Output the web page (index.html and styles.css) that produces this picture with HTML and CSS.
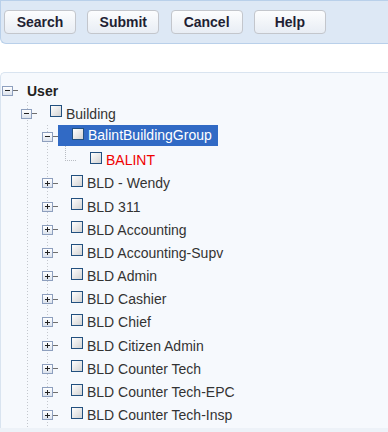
FILE: index.html
```html
<!DOCTYPE html>
<html lang="en">
<head>
  <meta charset="UTF-8" />
  <title>User Tree</title>
  <link rel="stylesheet" href="styles.css">
</head>
<body>
  <div class="toolbar">
    <button class="tool-button">Search</button>
    <button class="tool-button">Submit</button>
    <button class="tool-button">Cancel</button>
    <button class="tool-button">Help</button>
  </div>

  <div class="tree">
    <ul class="nodes">
      <li>
        <div class="row lvl0"><span class="exp minus"></span><span class="dash"></span><span class="node root"><span class="label">User</span></span></div>
        <ul class="nodes sub1">
          <li>
            <div class="row lvl1"><span class="exp minus"></span><span class="dash"></span><span class="node"><span class="check"></span><span class="label">Building</span></span></div>
            <ul class="nodes sub2">
              <li>
                <div class="row lvl2"><span class="exp minus"></span><span class="dash"></span><span class="node selected"><span class="check"></span><span class="label">BalintBuildingGroup</span></span></div>
                <ul class="nodes">
                  <li>
                    <div class="row lvl3"><span class="elbow"></span><span class="node"><span class="check"></span><span class="label red">BALINT</span></span></div>
                  </li>
                </ul>
              </li>
              <li><div class="row lvl2"><span class="exp plus"></span><span class="dash"></span><span class="node"><span class="check"></span><span class="label">BLD - Wendy</span></span></div></li>
              <li><div class="row lvl2"><span class="exp plus"></span><span class="dash"></span><span class="node"><span class="check"></span><span class="label">BLD 311</span></span></div></li>
              <li><div class="row lvl2"><span class="exp plus"></span><span class="dash"></span><span class="node"><span class="check"></span><span class="label">BLD Accounting</span></span></div></li>
              <li><div class="row lvl2"><span class="exp plus"></span><span class="dash"></span><span class="node"><span class="check"></span><span class="label">BLD Accounting-Supv</span></span></div></li>
              <li><div class="row lvl2"><span class="exp plus"></span><span class="dash"></span><span class="node"><span class="check"></span><span class="label">BLD Admin</span></span></div></li>
              <li><div class="row lvl2"><span class="exp plus"></span><span class="dash"></span><span class="node"><span class="check"></span><span class="label">BLD Cashier</span></span></div></li>
              <li><div class="row lvl2"><span class="exp plus"></span><span class="dash"></span><span class="node"><span class="check"></span><span class="label">BLD Chief</span></span></div></li>
              <li><div class="row lvl2"><span class="exp plus"></span><span class="dash"></span><span class="node"><span class="check"></span><span class="label">BLD Citizen Admin</span></span></div></li>
              <li><div class="row lvl2"><span class="exp plus"></span><span class="dash"></span><span class="node"><span class="check"></span><span class="label">BLD Counter Tech</span></span></div></li>
              <li><div class="row lvl2"><span class="exp plus"></span><span class="dash"></span><span class="node"><span class="check"></span><span class="label">BLD Counter Tech-EPC</span></span></div></li>
              <li><div class="row lvl2"><span class="exp plus"></span><span class="dash"></span><span class="node"><span class="check"></span><span class="label">BLD Counter Tech-Insp</span></span></div></li>
            </ul>
          </li>
        </ul>
      </li>
    </ul>
  </div>
  <div class="status-bar"></div>
</body>
</html>
```

FILE: styles.css
```css
* { box-sizing: border-box; }
body {
  margin: 0;
  font-family: 'Liberation Sans', Arial, sans-serif;
  font-size: 14px;
  background: #ffffff;
  color: #333;
  overflow: hidden;
}
.toolbar {
  height: 44px;
  display: flex;
  gap: 11.3px;
  padding: 9px 0 0 3px;
  background: #dde8f5;
  border: 1px solid #b9d0ea;
  border-right: none;
  border-radius: 0 0 0 6px;
}
.tool-button {
  width: 72px;
  height: 24px;
  padding: 0;
  font-family: inherit;
  font-size: 14px;
  font-weight: bold;
  color: #1f1f33;
  background: linear-gradient(#fcfdfe, #e8edf4);
  border: 1px solid #c3c6cc;
  border-radius: 4px;
  cursor: pointer;
}
.tree {
  margin-top: 28px;
  height: 356px;
  overflow: hidden;
  padding-top: 6px;
  background: #f6f9fd;
  border-top: 1px solid #d9e4f0;
  border-left: 1px solid #d9e4f0;
  border-radius: 5px 0 0 0;
}
.status-bar {
  height: 10px;
  background: #edf2f8;
}
.nodes {
  list-style: none;
  margin: 0;
  padding: 0;
}
.sub1 {
  background: linear-gradient(#c4c8ce 50%, transparent 50%) 26px 0 / 1px 3px repeat-y;
}
.sub2 {
  background: linear-gradient(#c4c8ce 50%, transparent 50%) 46px 0 / 1px 3px repeat-y;
}
.row {
  height: 23.2px;
  display: flex;
  align-items: center;
}
.lvl0 { padding-left: 1px; }
.lvl1 { padding-left: 20px; }
.lvl2 { padding-left: 41px; }
.lvl3 { padding-left: 60px; }
.exp {
  position: relative;
  flex: none;
  width: 11px;
  height: 10px;
  border: 1px solid #8d9fbe;
  background: linear-gradient(#ffffff, #dce3ed);
}
.exp::before {
  content: '';
  position: absolute;
  left: 2px;
  top: 3.5px;
  width: 5px;
  height: 1px;
  background: #222;
}
.exp.plus::after {
  content: '';
  position: absolute;
  left: 4px;
  top: 1.5px;
  width: 1px;
  height: 5px;
  background: #222;
}
.dash {
  flex: none;
  width: 5px;
  height: 1px;
  background: #6f6f6f;
}
.elbow {
  flex: none;
  align-self: flex-start;
  margin: -3px 0 0 4px;
  width: 11px;
  height: 15px;
  border-left: 1px dotted #b9bdc3;
  border-bottom: 1px dotted #b9bdc3;
}
.node {
  display: flex;
  align-items: center;
  height: 21px;
  padding: 0 6px 0 13px;
  white-space: nowrap;
}
.node.root { padding-left: 9px; }
.node.selected {
  padding-left: 14px;
  margin-bottom: 3px;
  background: #316ac5;
  color: #ffffff;
}
.lvl3 .node { padding-left: 14px; }
.check {
  flex: none;
  width: 12px;
  height: 12px;
  margin-bottom: 5px;
  margin-right: 4px;
  border: 1px solid #22507f;
  background: linear-gradient(135deg, #ffffff, #d2d2d2);
}
.node.selected .check { margin-bottom: 2px; }
.root .label {
  font-weight: bold;
  color: #222;
}
.label.red { color: #f00000; }
```
